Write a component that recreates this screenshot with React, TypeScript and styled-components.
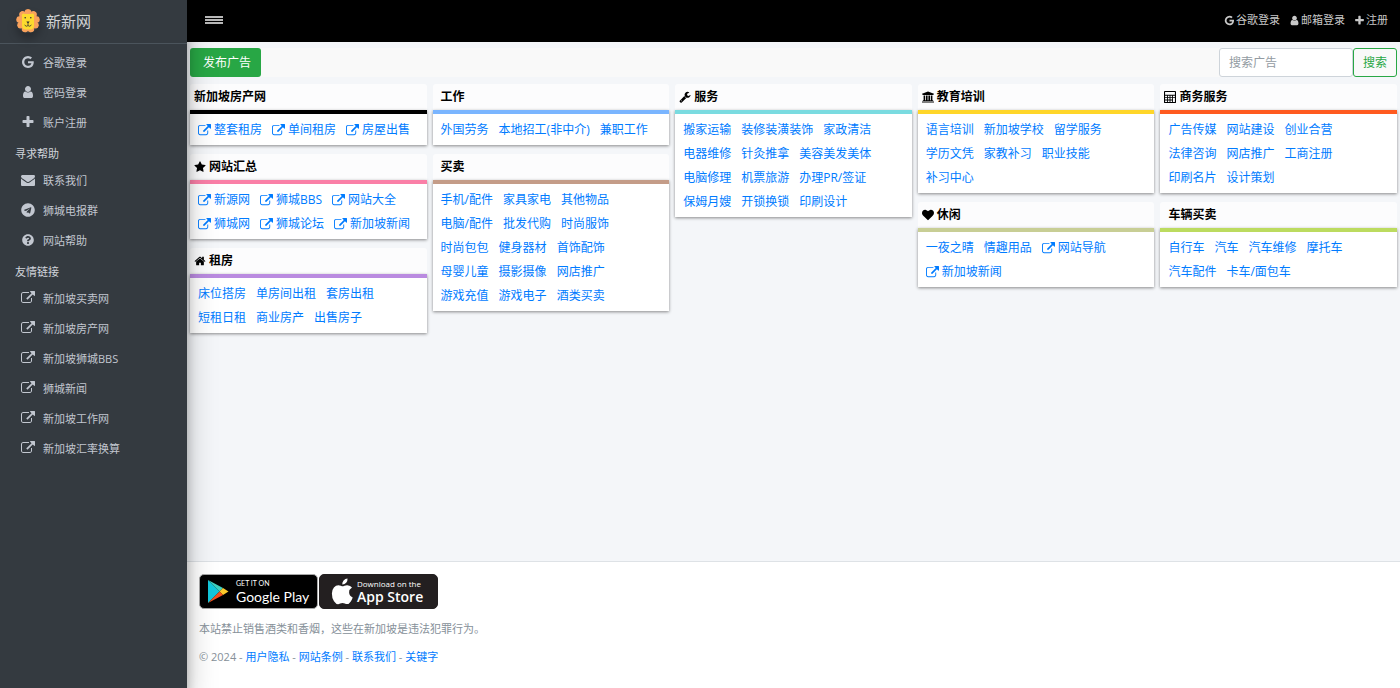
import React from "react";
import styled, { createGlobalStyle } from "styled-components";
import { FaTelegram, FaQuestionCircle } from "react-icons/fa";

const GlobalStyle = createGlobalStyle`
  * { box-sizing: border-box; }
  body {
    margin: 0;
    background: #f4f6f9;
    color: #000;
    font-family: "Open Sans", "Noto Sans CJK SC", sans-serif;
    font-size: 12px;
    line-height: 24px;
  }
  a { color: #007bff; text-decoration: none; }
  ul { list-style: none; margin: 0; padding: 0; }
  h1, h2, p { margin: 0; }
`;

/* ---------- icons ---------- */

const paths = {
  link: "M1408 928v320q0 119-84.5 203.5t-203.5 84.5h-832q-119 0-203.5-84.5t-84.5-203.5v-832q0-119 84.5-203.5t203.5-84.5h704q14 0 23 9t9 23v64q0 14-9 23t-23 9h-704q-66 0-113 47t-47 113v832q0 66 47 113t113 47h832q66 0 113-47t47-113v-320q0-14 9-23t23-9h64q14 0 23 9t9 23zm384-864v512q0 26-19 45t-45 19-45-19l-176-176-652 652q-10 10-23 10t-23-10l-114-114q-10-10-10-23t10-23l652-652-176-176q-19-19-19-45t19-45 45-19h512q26 0 45 19t19 45z",
  user: "M1536 1399q0 109-62.5 187t-150.5 78h-854q-88 0-150.5-78t-62.5-187q0-85 8.5-160.5t31.5-152 58.5-131 94-89 134.5-34.5q131 128 313 128t313-128q76 0 134.5 34.5t94 89 58.5 131 31.5 152 8.5 160.5zm-256-887q0 159-112.5 271.5t-271.5 112.5-271.5-112.5-112.5-271.5 112.5-271.5 271.5-112.5 271.5 112.5 112.5 271.5z",
  plus: "M1600 736v192q0 40-28 68t-68 28h-416v416q0 40-28 68t-68 28h-192q-40 0-68-28t-28-68v-416h-416q-40 0-68-28t-28-68v-192q0-40 28-68t68-28h416v-416q0-40 28-68t68-28h192q40 0 68 28t28 68v416h416q40 0 68 28t28 68z",
  google: "M896 786h725q12 67 12 128 0 217-91 387.5t-259.5 266.5-386.5 96q-157 0-299-60.5t-245-163.5-163.5-245-60.5-299 60.5-299 163.5-245 245-163.5 299-60.5q300 0 515 201l-209 201q-123-119-306-119-129 0-238.5 65t-173.5 176.5-64 243.5 64 243.5 173.5 176.5 238.5 65q87 0 160-24t120-60 82-82 51.5-87 22.5-78h-436v-264z",
  envelope: "M1792 710v794q0 66-47 113t-113 47h-1472q-66 0-113-47t-47-113v-794q44 49 101 87 362 246 497 345 57 42 92.5 65.5t94.5 48 110 24.5h2q51 0 110-24.5t94.5-48 92.5-65.5q170-123 498-345 57-39 100-87zm0-294q0 79-49 151t-122 123q-376 261-468 325-10 7-42.5 31t-54 38.5-52 32.5-57.5 27-50 9h-2q-23 0-50-9t-57.5-27-52-32.5-54-38.5-42.5-31q-91-64-262-182.5t-205-142.5q-62-42-117-115.5t-55-136.5q0-78 41.5-130t118.5-52h1472q65 0 112.5 47t47.5 113z",
  star: "M1728 647q0 22-26 48l-363 354 86 500q1 7 1 20 0 21-10.5 35.5t-30.5 14.5q-19 0-40-12l-449-236-449 236q-22 12-40 12-21 0-31.5-14.5t-10.5-35.5q0-6 2-20l86-500-364-354q-25-27-25-48 0-37 56-46l502-73 225-455q19-41 49-41t49 41l225 455 502 73q56 9 56 46z",
  home: "M1472 992v480q0 26-19 45t-45 19h-384v-384h-256v384h-384q-26 0-45-19t-19-45v-480q0-1 .5-3t.5-3l575-474 575 474q1 2 1 6zm223-69l-62 74q-8 9-21 11h-3q-13 0-21-7l-692-577-692 577q-12 8-24 7-13-2-21-11l-62-74q-8-10-7-23.5t11-21.5l719-599q32-26 76-26t76 26l244 204v-195q0-14 9-23t23-9h192q14 0 23 9t9 23v408l219 182q10 8 11 21.5t-7 23.5z",
  wrench: "M448 1472q0-26-19-45t-45-19-45 19-19 45 19 45 45 19 45-19 19-45zm644-420l-682 682q-37 37-90 37-52 0-91-37l-106-108q-38-36-38-90 0-53 38-91l681-681q39 98 114.5 173.5t173.5 114.5zm634-435q0 39-23 106-47 134-164.5 217.5t-258.5 83.5q-185 0-316.5-131.5t-131.5-316.5 131.5-316.5 316.5-131.5q58 0 121.5 16.5t107.5 46.5q16 11 16 28t-16 28l-293 169v224l193 107q5-3 79-48.5t135.5-81 70.5-35.5q15 0 23.5 10t8.5 25z",
  bank: "M960 0l960 384v128h-128q0 26-20.5 45t-48.5 19h-1526q-28 0-48.5-19t-20.5-45h-128v-128zm-704 640h256v768h128v-768h256v768h128v-768h256v768h128v-768h256v768h59q28 0 48.5 19t20.5 45v64h-1664v-64q0-26 20.5-45t48.5-19h59v-768zm1595 960q28 0 48.5 19t20.5 45v128h-1920v-128q0-26 20.5-45t48.5-19h1782z",
  heart: "M896 1664q-26 0-44-18l-624-602q-10-8-27.5-26t-55.5-65.5-68-97.5-53.5-121-23.5-138q0-220 127-344t351-124q62 0 126.5 21.5t120 58 95.5 68.5 76 68q36-36 76-68t95.5-68.5 120-58 126.5-21.5q224 0 351 124t127 344q0 221-229 450l-623 600q-18 18-44 18z",
  calculator: "M128 0H1664Q1792 0 1792 128V1664Q1792 1792 1664 1792H128Q0 1792 0 1664V128Q0 0 128 0ZM160 160V544H1632V160ZM160 704V928H448V704ZM576 704V928H832V704ZM960 704V928H1216V704ZM1344 704V928H1632V704ZM160 1056V1280H448V1056ZM576 1056V1280H832V1056ZM960 1056V1280H1216V1056ZM160 1408V1632H448V1408ZM576 1408V1632H832V1408ZM960 1408V1632H1216V1408ZM1344 1056V1632H1632V1056Z",
};

type IconName = keyof typeof paths;

const Glyph = styled.svg<{ $size: number }>`
  flex: none;
  width: ${(p) => p.$size}px;
  height: ${(p) => p.$size}px;
  fill: currentColor;
`;

function Icon({ name, size = 12 }: { name: IconName; size?: number }) {
  return (
    <Glyph $size={size} viewBox={name === "bank" ? "0 0 1920 1792" : "0 0 1792 1792"} aria-hidden="true">
      <path fillRule="evenodd" d={paths[name]} />
    </Glyph>
  );
}

function LionLogo() {
  const mane = Array.from({ length: 9 }, (_, i) => {
    const a = (i * 2 * Math.PI) / 9 - Math.PI / 2;
    return [12 + Math.cos(a) * 8.6, 12 + Math.sin(a) * 8.6];
  });
  return (
    <LogoArt viewBox="0 0 24 24" aria-hidden="true">
      <circle cx="12" cy="12" r="9.6" fill="#f9a25c" />
      {mane.map(([x, y], i) => (
        <circle key={i} cx={x} cy={y} r="3.3" fill="#f9a25c" />
      ))}
      <circle cx="7.6" cy="6.4" r="1.8" fill="#fdd835" />
      <circle cx="16.4" cy="6.4" r="1.8" fill="#fdd835" />
      <rect x="6" y="5" width="12" height="15.4" rx="3.6" fill="#fddb2e" />
      <circle cx="9.2" cy="8.8" r="0.8" fill="#333" />
      <circle cx="14.8" cy="8.8" r="0.8" fill="#333" />
      <path d="M10.400 12.400h3.200L12 15z" fill="#333" />
      <path d="M12 14.600v1.800M8.600 16q1.600 2.200 3.400.6q1.800 1.600 3.400-.6" fill="none" stroke="#333" strokeWidth=".8" />
    </LogoArt>
  );
}

/* ---------- sidebar ---------- */

const Shell = styled.div`
  display: grid;
  grid-template-columns: 187px 1fr;
  min-height: 100vh;
`;

const Sidebar = styled.aside`
  position: relative;
  z-index: 2;
  background: #343a40;
  color: #c2c7d0;
  box-shadow: 0 14px 28px rgba(0, 0, 0, 0.25), 0 10px 10px rgba(0, 0, 0, 0.22);
`;

const Brand = styled.a`
  display: flex;
  align-items: center;
  gap: 6px;
  height: 44px;
  padding: 0 16px 2px;
  border-bottom: 1px solid #4b545c;
  color: #d1d3d5;
  font-size: 15px;
`;

const LogoArt = styled.svg`
  width: 24px;
  height: 24px;
  border-radius: 50%;
  box-shadow: 0 6px 8px rgba(0, 0, 0, 0.25);
`;

const SideNav = styled.nav`
  padding-top: 4px;
  font-size: 11px;
`;

const SideHeading = styled.h2`
  height: 28px;
  padding: 2px 15px 0;
  color: #d0d4db;
  font-size: 11px;
  font-weight: 400;
  line-height: 28px;
`;

const SideLink = styled.a`
  display: flex;
  align-items: center;
  gap: 8px;
  height: 30px;
  padding-left: 21px;
  color: #c2c7d0;

  svg { flex: none; }
`;

const IconSlot = styled.span`
  display: flex;
  justify-content: center;
  width: 14px;
  padding-bottom: 2px;
`;

/* ---------- top bar ---------- */

const Main = styled.div`
  display: flex;
  flex-direction: column;
  min-width: 0;
`;

const TopBar = styled.header`
  display: flex;
  align-items: center;
  justify-content: space-between;
  height: 42px;
  padding: 0 12px 2px 17px;
  background: #000;
`;

const MenuButton = styled.button`
  display: flex;
  flex-direction: column;
  gap: 1px;
  width: 20px;
  padding: 0 1px;
  border: 0;
  background: none;
`;

const MenuLine = styled.span`
  height: 2px;
  width: 100%;
  background: #b8b8b8;
`;

const UserNav = styled.nav`
  display: flex;
  gap: 9px;
`;

const UserLink = styled.a`
  display: flex;
  align-items: center;
  gap: 1px;
  color: #c8c8c8;
  font-size: 11px;
`;

/* ---------- toolbar ---------- */

const Toolbar = styled.div`
  display: flex;
  justify-content: space-between;
  margin: 6px 3px 7px;
  background: #f9f9f9;
`;

const PostButton = styled.button`
  height: 29px;
  padding: 0 10px 0 13px;
  border: 0;
  border-radius: 3px;
  background: #28a745;
  color: #fff;
  font: inherit;
`;

const SearchForm = styled.form`
  display: flex;
`;

const SearchInput = styled.input`
  width: 134px;
  height: 29px;
  padding: 0 9px;
  border: 1px solid #ced4da;
  border-radius: 3px;
  background: #fff;
  font: inherit;

  &::placeholder { color: #939ba2; }
`;

const SearchButton = styled.button`
  height: 29px;
  padding: 0 9px;
  border: 1px solid #28a745;
  border-radius: 3px;
  background: transparent;
  color: #28a745;
  font: inherit;
`;

/* ---------- cards ---------- */

const Board = styled.main`
  display: grid;
  grid-template-columns: repeat(5, 1fr);
  align-items: start;
  gap: 6px;
  flex: 1;
  padding: 0 3px 8px;
`;

const Column = styled.div`
  display: grid;
  gap: 9px;
`;

const CardTitle = styled.h2<{ $inset: boolean }>`
  display: flex;
  align-items: center;
  gap: 3px;
  height: 26px;
  padding: 0 ${(p) => (p.$inset ? 8 : 4)}px;
  border-radius: 3px 3px 0 0;
  background: #fcfcfd;
  font-size: 12px;
  font-weight: 700;
`;

const CardBody = styled.ul<{ $accent: string }>`
  display: flex;
  flex-wrap: wrap;
  column-gap: 10px;
  padding: 4px 8px 3px;
  border-top: 4px solid ${(p) => p.$accent};
  background: #fff;
  box-shadow: 0 1px 3px rgba(0, 0, 0, 0.45);
`;

const CardLink = styled.a`
  display: flex;
  align-items: center;
  gap: 3px;
  white-space: nowrap;
`;

/* ---------- footer ---------- */

const Footer = styled.footer`
  height: 127px;
  padding: 12px 12px 0;
  border-top: 1px solid #dee2e6;
  background: #fff;
  color: #869099;
  font-size: 11px;
`;

const Badges = styled.div`
  display: flex;
  gap: 1px;
  margin-bottom: 8px;
`;

const Badge = styled.a<{ $bg: string; $edge: string; $pad: number; $gap: number }>`
  display: flex;
  align-items: center;
  gap: ${(p) => p.$gap}px;
  width: 119px;
  height: 35px;
  padding-left: ${(p) => p.$pad}px;
  border: 1px solid ${(p) => p.$edge};
  border-radius: 5px;
  background: ${(p) => p.$bg};
  color: #fff;
  white-space: nowrap;

  svg { flex: none; }
`;

const BadgeText = styled.span<{ $font: string; $weight: number }>`
  display: flex;
  flex-direction: column;
  font-family: ${(p) => p.$font};
  font-weight: ${(p) => p.$weight};
`;

const BadgeSmall = styled.span<{ $size: number }>`
  font-size: ${(p) => p.$size}px;
  font-weight: 400;
  line-height: 11px;
`;

const BadgeLarge = styled.span`
  font-size: 14px;
  line-height: 16px;
`;

const FootLine = styled.p`
  margin-bottom: 4px;
`;

/* ---------- data ---------- */

type Entry = { text: string; ext?: boolean };
type CardData = { title: string; icon?: IconName; accent: string; inset?: boolean; links: Entry[] };

const plain = (s: string): Entry[] => s.split(" ").map((text) => ({ text }));
const ext = (s: string): Entry[] => s.split(" ").map((text) => ({ text, ext: true }));

const columns: CardData[][] = [
  [
    { title: "新加坡房产网", accent: "#000", links: ext("整套租房 单间租房 房屋出售") },
    { title: "网站汇总", icon: "star", accent: "#fa7fa7", links: ext("新源网 狮城BBS 网站大全 狮城网 狮城论坛 新加坡新闻") },
    { title: "租房", icon: "home", accent: "#ba8be0", links: plain("床位搭房 单房间出租 套房出租 短租日租 商业房产 出售房子") },
  ],
  [
    { title: "工作", inset: true, accent: "#7ab5ff", links: plain("外国劳务 本地招工(非中介) 兼职工作") },
    {
      title: "买卖",
      inset: true,
      accent: "#c49c88",
      links: plain("手机/配件 家具家电 其他物品 电脑/配件 批发代购 时尚服饰 时尚包包 健身器材 首饰配饰 母婴儿童 摄影摄像 网店推广 游戏充值 游戏电子 酒类买卖"),
    },
  ],
  [
    {
      title: "服务",
      icon: "wrench",
      accent: "#7adbe0",
      links: plain("搬家运输 装修装潢装饰 家政清洁 电器维修 针灸推拿 美容美发美体 电脑修理 机票旅游 办理PR/签证 保姆月嫂 开锁换锁 印刷设计"),
    },
  ],
  [
    { title: "教育培训", icon: "bank", accent: "#ffd629", links: plain("语言培训 新加坡学校 留学服务 学历文凭 家教补习 职业技能 补习中心") },
    { title: "休闲", icon: "heart", accent: "#c8ce95", links: [...plain("一夜之晴 情趣用品"), ...ext("网站导航 新加坡新闻")] },
  ],
  [
    { title: "商务服务", icon: "calculator", accent: "#ff5a1f", links: plain("广告传媒 网站建设 创业合营 法律咨询 网店推广 工商注册 印刷名片 设计策划") },
    { title: "车辆买卖", inset: true, accent: "#bcdb5f", links: plain("自行车 汽车 汽车维修 摩托车 汽车配件 卡车/面包车") },
  ],
];

const friendLinks = ["新加坡买卖网", "新加坡房产网", "新加坡狮城BBS", "狮城新闻", "新加坡工作网", "新加坡汇率换算"];

function Card({ card }: { card: CardData }) {
  return (
    <section>
      <CardTitle $inset={!!card.inset}>
        {card.icon && <Icon name={card.icon} />}
        {card.title}
      </CardTitle>
      <CardBody $accent={card.accent}>
        {card.links.map((l) => (
          <li key={l.text}>
            <CardLink href="#">
              {l.ext && <Icon name="link" size={13} />}
              {l.text}
            </CardLink>
          </li>
        ))}
      </CardBody>
    </section>
  );
}

function SideItem({ icon, children }: { icon: React.ReactNode; children: string }) {
  return (
    <li>
      <SideLink href="#">
        <IconSlot>{icon}</IconSlot>
        {children}
      </SideLink>
    </li>
  );
}

export default function App() {
  return (
    <>
      <GlobalStyle />
      <Shell>
        <Sidebar>
          <Brand href="#">
            <LionLogo />
            新新网
          </Brand>
          <SideNav>
            <ul>
              <SideItem icon={<Icon name="google" size={14} />}>谷歌登录</SideItem>
              <SideItem icon={<Icon name="user" size={14} />}>密码登录</SideItem>
              <SideItem icon={<Icon name="plus" size={14} />}>账户注册</SideItem>
            </ul>
            <SideHeading>寻求帮助</SideHeading>
            <ul>
              <SideItem icon={<Icon name="envelope" size={14} />}>联系我们</SideItem>
              <SideItem icon={<FaTelegram size={14} />}>狮城电报群</SideItem>
              <SideItem icon={<FaQuestionCircle size={12} />}>网站帮助</SideItem>
            </ul>
            <SideHeading>友情链接</SideHeading>
            <ul>
              {friendLinks.map((t) => (
                <SideItem key={t} icon={<Icon name="link" size={14} />}>{t}</SideItem>
              ))}
            </ul>
          </SideNav>
        </Sidebar>
        <Main>
          <TopBar>
            <MenuButton aria-label="菜单">
              <MenuLine />
              <MenuLine />
              <MenuLine />
            </MenuButton>
            <UserNav>
              <UserLink href="#"><Icon name="google" size={11} />谷歌登录</UserLink>
              <UserLink href="#"><Icon name="user" size={11} />邮箱登录</UserLink>
              <UserLink href="#"><Icon name="plus" size={11} />注册</UserLink>
            </UserNav>
          </TopBar>
          <Toolbar>
            <PostButton>发布广告</PostButton>
            <SearchForm>
              <SearchInput aria-label="搜索广告" placeholder="搜索广告" />
              <SearchButton type="button">搜索</SearchButton>
            </SearchForm>
          </Toolbar>
          <Board>
            {columns.map((cards, i) => (
              <Column key={i}>
                {cards.map((c) => (
                  <Card key={c.title} card={c} />
                ))}
              </Column>
            ))}
          </Board>
          <Footer>
            <Badges>
              <Badge href="#" $bg="#000" $edge="#a6a6a6" $pad={7} $gap={7}>
                <svg width="22" height="25" viewBox="0 0 22 25" aria-hidden="true">
                  <path d="M1 1L12.500 12.500 1 24z" fill="#13c8dc" />
                  <path d="M1 1l15 8-3.500 3.500z" fill="#3fd0c0" />
                  <path d="M16 9l5.500 3.500L16 16l-3.500-3.500z" fill="#fdc92b" />
                  <path d="M1 24l11.500-11.500L16 16z" fill="#f4511e" />
                </svg>
                <BadgeText $font="Lato, sans-serif" $weight={400}>
                  <BadgeSmall $size={7}>GET IT ON</BadgeSmall>
                  <BadgeLarge>Google Play</BadgeLarge>
                </BadgeText>
              </Badge>
              <Badge href="#" $bg="#231f20" $edge="#231f20" $pad={10} $gap={3}>
                <svg width="24" height="27" viewBox="0 0 24 27" fill="#fff" aria-hidden="true">
                  <path d="M17.500.500q.3 2.300-1.300 4.200T12.300 6.500q-.3-2.200 1.300-4T17.500.500zM22 9.500q-3 1.900-2.900 4.800.1 3.700 3.600 5.200-.6 2-1.900 3.900-1.800 2.700-3.800 2.700-1 0-2.200-.6-1.100-.5-2.300-.5t-2.400.6q-1.200.5-2 .6-2 0-4.100-3Q1.800 19.900 1.900 15.500q.1-3.800 2-6T8.400 7.200q1.100 0 2.500.6 1.300.5 1.700.5.500 0 1.900-.6t2.900-.5q3 .2 4.600 2.300z" />
                </svg>
                <BadgeText $font='"Open Sans", sans-serif' $weight={600}>
                  <BadgeSmall $size={8}>Download on the</BadgeSmall>
                  <BadgeLarge>App Store</BadgeLarge>
                </BadgeText>
              </Badge>
            </Badges>
            <FootLine>本站禁止销售酒类和香烟，这些在新加坡是违法犯罪行为。</FootLine>
            <FootLine>
              © 2024 - <a href="#">用户隐私</a> - <a href="#">网站条例</a> - <a href="#">联系我们</a> - <a href="#">关键字</a>
            </FootLine>
          </Footer>
        </Main>
      </Shell>
    </>
  );
}
